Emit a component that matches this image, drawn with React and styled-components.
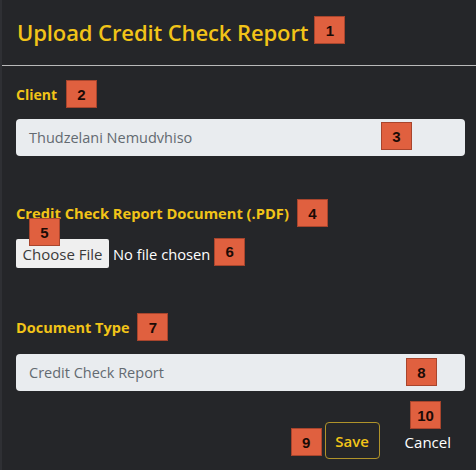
import React from "react";
import styled, { createGlobalStyle } from "styled-components";

const Global = createGlobalStyle`
  html, body { margin: 0; padding: 0; background: #252629; }
  body { font-family: "Open Sans", "Noto Sans", sans-serif; }
  * { box-sizing: border-box; }
`;

const Panel = styled.div`
  width: 476px;
  height: 470px;
  background: #252629;
  border-left: 2px solid #2f3034;
  overflow: hidden;
`;

const Header = styled.div`
  height: 66px;
  padding: 0 0 2px 15px;
  display: flex;
  align-items: center;
  border-bottom: 1px solid #b9b9b9;
`;

const Title = styled.h1`
  margin: 0;
  font-size: 22px;
  font-weight: 600;
  color: #f2c418;
  letter-spacing: -0.1px;
`;

const Body = styled.div`
  padding: 0 11px 0 14px;
  display: flex;
  flex-direction: column;
`;

const LabelRow = styled.div`
  display: flex;
  align-items: center;
  gap: ${(p) => p.$gap || 8}px;
  margin-top: ${(p) => p.$top}px;
  height: 28px;
`;

const Label = styled.label`
  font-size: ${(p) => p.$size || 14}px;
  font-weight: 700;
  color: #f2c418;
`;

const Badge = styled.span`
  display: inline-flex;
  align-items: center;
  justify-content: center;
  width: 31px;
  height: 28px;
  background: #e0603f;
  border: 1px solid #a8452d;
  color: #1b0b06;
  font-family: "Liberation Sans", Arial, sans-serif;
  font-weight: 700;
  font-size: 15px;
  flex-shrink: 0;
`;

const OverBadge = styled(Badge)`
  position: absolute;
  left: ${(p) => p.$x}px;
  top: ${(p) => p.$y}px;
`;

const Field = styled.div`
  position: relative;
  margin-top: ${(p) => p.$top}px;
  height: 37px;
  background: #e9ecef;
  border-radius: 4px;
  display: flex;
  align-items: center;
  padding-left: 13px;
  font-size: 14.5px;
  color: #636a71;
`;

const FileRow = styled.div`
  position: relative;
  margin-top: ${(p) => p.$top}px;
  display: flex;
  align-items: center;
  gap: 4px;
`;

const FileButton = styled.button`
  width: 93px;
  height: 29px;
  background: #efefef;
  border: none;
  border-radius: 2px;
  font-family: "Open Sans", sans-serif;
  font-size: 15px;
  color: #3a3a3a;
  padding: 0;
`;

const FileText = styled.span`
  font-size: 14.7px;
  color: #ffffff;
`;

const Actions = styled.div`
  position: relative;
  margin-top: 31px;
  display: flex;
  justify-content: flex-end;
  align-items: center;
  gap: 3px;
  padding-right: 14px;
`;

const SaveButton = styled.button`
  width: 55px;
  height: 37px;
  background: transparent;
  border: 1px solid #b0932a;
  border-radius: 4px;
  color: #f2c418;
  font-family: "Open Sans", sans-serif;
  font-size: 15px;
  font-weight: 600;
  margin-right: 22px;
`;

const CancelButton = styled.button`
  background: none;
  border: none;
  color: #ffffff;
  font-family: "Open Sans", sans-serif;
  font-size: 15px;
  padding: 0;
  margin-top: 2px;
`;

export default function App() {
  return (
    <>
      <Global />
      <Panel>
        <Header>
          <Title>Upload Credit Check Report</Title>
          <Badge style={{ marginLeft: 6, marginTop: -3 }}>1</Badge>
        </Header>
        <Body>
          <LabelRow $top={14} $gap={9}>
            <Label>Client</Label>
            <Badge>2</Badge>
          </LabelRow>
          <Field $top={11}>
            Thudzelani Nemudvhiso
            <OverBadge $x={365} $y={3}>3</OverBadge>
          </Field>
          <LabelRow $top={43}>
            <Label $size={14.7}>Credit Check Report Document (.PDF)</Label>
            <Badge>4</Badge>
          </LabelRow>
          <FileRow $top={12}>
            <FileButton>Choose File</FileButton>
            <FileText>No file chosen</FileText>
            <Badge style={{ marginTop: -4 }}>6</Badge>
            <OverBadge $x={13} $y={-21}>5</OverBadge>
          </FileRow>
          <LabelRow $top={45}>
            <Label $size={14.5}>Document Type</Label>
            <Badge>7</Badge>
          </LabelRow>
          <Field $top={13}>
            Credit Check Report
            <OverBadge $x={390} $y={4}>8</OverBadge>
          </Field>
          <Actions>
            <Badge style={{ marginTop: 3 }}>9</Badge>
            <SaveButton>Save</SaveButton>
            <CancelButton>Cancel</CancelButton>
            <OverBadge $x={394} $y={-21}>10</OverBadge>
          </Actions>
        </Body>
      </Panel>
    </>
  );
}
